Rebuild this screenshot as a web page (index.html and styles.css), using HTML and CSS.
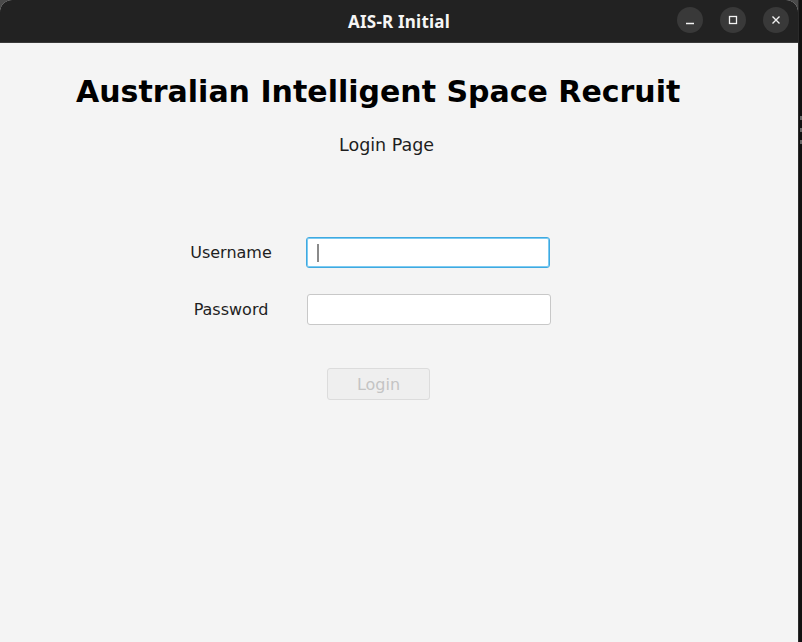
FILE: index.html
```html
<!DOCTYPE html>
<html>
<head>
<meta charset="utf-8">
<link rel="stylesheet" href="styles.css">
</head>
<body>
<div class="screen">
  <div class="window">
    <header class="titlebar">
      <div class="title">AIS-R Initial</div>
      <div class="controls">
        <span class="ctl"><svg width="12" height="12" viewBox="0 0 12 12"><path d="M2 9.5h8" stroke="#f2f2f2" stroke-width="1.5"/></svg></span>
        <span class="ctl"><svg width="12" height="12" viewBox="0 0 12 12"><rect x="2.5" y="2.5" width="7" height="7" fill="none" stroke="#f2f2f2" stroke-width="1.3"/></svg></span>
        <span class="ctl"><svg width="12" height="12" viewBox="0 0 12 12"><path d="M2.5 2.5l7 7M9.5 2.5l-7 7" stroke="#f2f2f2" stroke-width="1.4"/></svg></span>
      </div>
    </header>
    <main class="content">
      <h1 class="heading">Australian Intelligent Space Recruit</h1>
      <p class="subtitle">Login Page</p>
      <form class="form">
        <label class="label">Username</label>
        <div class="field focused"><span class="caret"></span></div>
        <label class="label">Password</label>
        <div class="field"></div>
      </form>
      <div class="actions"><button class="btn" disabled>Login</button></div>
    </main>
  </div>
  <div class="edge">
    <span class="mark m1"></span>
    <span class="mark m2"></span>
    <span class="mark m3"></span>
  </div>
</div>
</body>
</html>
```
FILE: styles.css
```css
html, body {
  margin: 0;
  padding: 0;
  background: #4a4a4a;
}
.screen {
  display: flex;
  width: 802px;
  height: 642px;
  overflow: hidden;
}
.window {
  width: 798px;
  display: flex;
  flex-direction: column;
  background: #f4f4f4;
  border-top-left-radius: 12px;
  border-top-right-radius: 12px;
  overflow: hidden;
}
.titlebar {
  height: 42px;
  flex: none;
  background: #222222;
  border-bottom: 1px solid #3a3a3a;
  position: relative;
  display: flex;
  align-items: center;
  justify-content: center;
}
.title {
  color: #f6f6f6;
  font-family: "Noto Sans", "DejaVu Sans", sans-serif;
  font-weight: bold;
  font-size: 17px;
  letter-spacing: 0.2px;
}
.controls {
  position: absolute;
  right: 9px;
  top: 7px;
  display: flex;
  gap: 17px;
}
.ctl {
  width: 26px;
  height: 26px;
  border-radius: 50%;
  background: #393939;
  display: flex;
  align-items: center;
  justify-content: center;
}
.content {
  flex: 1;
  background: #f4f4f4;
  font-family: "DejaVu Sans", sans-serif;
  color: #1c1c1c;
}
.heading {
  margin: 31px 0 0 76px;
  font-size: 30px;
  font-weight: bold;
  color: #000;
  line-height: 36px;
  white-space: nowrap;
}
.subtitle {
  margin: 25px 0 0 339px;
  font-size: 17.5px;
  line-height: 20px;
  color: #1e1e1e;
}
.form {
  margin: 82px 0 0 156px;
  display: grid;
  grid-template-columns: 150px 245px;
  row-gap: 26px;
  align-items: center;
}
.label {
  text-align: center;
  font-size: 16px;
  color: #1e1e1e;
}
.field {
  height: 29px;
  border: 1px solid #c8c8c8;
  border-radius: 3px;
  background: #fff;
  margin-left: 1px;
  position: relative;
}
.field.focused {
  margin-left: 0;
  margin-right: 1px;
  border: 1px solid #3fa9e0;
  box-shadow: inset 0 0 0 1px #7ccbf2;
}
.caret {
  position: absolute;
  left: 10px;
  top: 6px;
  width: 2px;
  height: 18px;
  background: #8a8a8a;
}
.actions {
  margin: 43px 0 0 327px;
}
.btn {
  width: 103px;
  height: 32px;
  border: 1px solid #dcdcdc;
  border-radius: 3px;
  background: #efefef;
  color: #c4c4c4;
  font-family: "DejaVu Sans", sans-serif;
  font-size: 16px;
  padding: 0;
}
.edge {
  width: 4px;
  background: #111;
  border-left: 1px solid #2a2a2a;
  box-sizing: border-box;
  position: relative;
}
.mark {
  position: absolute;
  left: 1px;
  width: 2px;
  background: #666;
}
.m1 { top: 116px; height: 4px; }
.m2 { top: 128px; height: 4px; }
.m3 { top: 140px; height: 4px; }
```
